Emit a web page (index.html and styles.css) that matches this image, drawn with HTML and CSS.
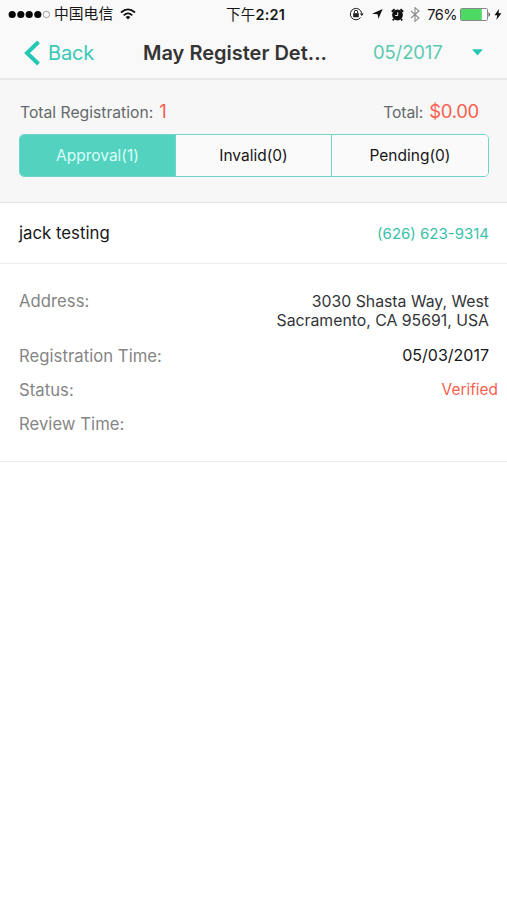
FILE: index.html
```html
<!DOCTYPE html>
<html lang="en">
<head>
<meta charset="utf-8">
<meta name="viewport" content="width=device-width, initial-scale=1">
<title>May Register Details</title>
<link rel="stylesheet" href="styles.css">
</head>
<body>
<header class="top">
  <div class="status">
    <div class="status-left">
      <svg class="signal" width="42" height="9" viewBox="0 0 42 9"><g fill="#050505"><circle cx="4.2" cy="4.5" r="3.6"/><circle cx="12.8" cy="4.5" r="3.6"/><circle cx="21.2" cy="4.5" r="3.6"/><circle cx="29.8" cy="4.5" r="3.6"/></g><circle cx="38.4" cy="4.5" r="3.2" fill="none" stroke="#888" stroke-width=".8"/></svg>
      <span class="carrier">中国电信</span>
      <svg class="wifi" width="16" height="12" viewBox="0 0 16 12" fill="none" stroke="#111" stroke-width="1.8"><path d="M1 4.5Q8-1.8 15 4.5M3.7 7.3Q8 3.5 12.3 7.3"/><path d="M5.6 9Q8 7 10.4 9L8 11.6Z" fill="#111" stroke="none"/></svg>
    </div>
    <span class="clock">下午<b>2:21</b></span>
    <div class="status-right">
      <svg width="15" height="14" viewBox="0 0 15 14" fill="none" stroke="#222"><path d="M11.6 10.5A5.7 5.7 0 1 1 12.7 6.5"/><path d="M10.8 6.5h4L12.8 9z" fill="#222" stroke="none"/><path d="M4.2 6.2h5.6v4H4.2z" fill="#222" stroke="none"/><path d="M5.3 6.4V5a1.7 1.7 0 0 1 3.4 0v1.4"/></svg>
      <svg class="location" width="11" height="10" viewBox="0 0 11 10"><path d="M10.7 0L6.4 9.8 5.6 5.3 0 4.7Z" fill="#111"/></svg>
      <svg class="alarm" width="13" height="13" viewBox="0 0 13 13"><circle cx="6.5" cy="7" r="5.4" fill="#111"/><path d="M.8 3.7L3.6 1.2M12.2 3.7L9.4 1.2M3 11l-1.2 1.4M10 11l1.2 1.4" stroke="#111" stroke-width="1.9"/><path d="M4.2 7.5h2.5V4.3" fill="none" stroke="#f8f8f8" stroke-width="1"/></svg>
      <svg class="bluetooth" width="10" height="15" viewBox="0 0 10 15"><path d="M1 4l8 7-4 3.3V.7L9 4l-8 7" fill="none" stroke="#8d8d8d" stroke-width="1.1"/></svg>
      <span class="percent">76%</span>
      <svg class="battery" width="31" height="13" viewBox="0 0 31 13"><rect x=".5" y=".5" width="27" height="12" rx="1.2" fill="#fff" stroke="#888"/><path d="M1 1h20.8v11H1z" fill="#4cd964"/><path d="M28.6 4q2.4 2.5 0 5z" fill="#222"/></svg>
      <svg class="bolt" width="8" height="11" viewBox="0 0 8 11"><path d="M5 0L.5 6.2h2.8L2.3 11 7.5 4.3H4.6Z" fill="#111"/></svg>
    </div>
  </div>
  <nav class="nav">
    <a class="back"><svg width="17" height="26" viewBox="0 0 17 26"><path d="M14.5 2L3 13l11.5 11" fill="none" stroke="#25c8b5" stroke-width="4"/></svg><span>Back</span></a>
    <h1>May Register Det...</h1>
    <div class="month"><span>05/2017</span><svg width="11" height="7" viewBox="0 0 11 7"><path d="M0 .3h11L5.5 6.5Z" fill="#25c8b5"/></svg></div>
  </nav>
</header>
<section class="summary">
  <div class="totals">
    <p><span class="reg-label">Total Registration:</span><strong class="count">1</strong></p>
    <p><span class="total-label">Total:</span><strong class="money">$0.00</strong></p>
  </div>
  <div class="tabs">
    <button class="tab active"><span>Approval(1)</span></button>
    <button class="tab"><span>Invalid(0)</span></button>
    <button class="tab"><span>Pending(0)</span></button>
  </div>
</section>
<main>
  <div class="person"><span class="name">jack testing</span><a class="phone">(626) 623-9314</a></div>
  <dl class="details">
    <div class="row address"><dt>Address:</dt><dd>3030 Shasta Way, West<br>Sacramento, CA 95691, USA</dd></div>
    <div class="row"><dt>Registration Time:</dt><dd class="date">05/03/2017</dd></div>
    <div class="row"><dt>Status:</dt><dd class="verified">Verified</dd></div>
    <div class="row"><dt>Review Time:</dt><dd></dd></div>
  </dl>
</main>
</body>
</html>
```
FILE: styles.css
```css
* { box-sizing: border-box; margin: 0; padding: 0; }
body { font-family: Inter, "Noto Sans CJK SC", sans-serif; background: #fff; color: #171717; font-size: 16px; }
svg { display: block; flex: none; }
span, a, dt, dd, h1 { white-space: nowrap; }
.top { height: 80px; background: #f9f9f9; border-bottom: 2px solid #e9e9e9; }
.status { height: 27px; display: grid; grid-template-columns: 226px 1fr auto; align-items: center; padding-right: 5px; }
.status-left, .status-right { display: flex; align-items: center; }
.status-left { padding-left: 8px; }
.carrier { font-size: 14.8px; line-height: 28px; margin-left: 4px; }
.wifi { margin-left: 7px; }
.clock { font-size: 14.5px; line-height: 27px; letter-spacing: .2px; }
.clock b { font-weight: 600; }
.location { margin-left: 8px; }
.alarm { margin-left: 8px; }
.bluetooth { margin-left: 6px; }
.percent { font-size: 14.5px; letter-spacing: -.5px; margin-left: 7px; }
.battery { margin-left: 3px; }
.bolt { margin-left: 3px; }
.nav { height: 51px; display: grid; grid-template-columns: 143px 230px 1fr; align-items: center; }
.back { display: flex; align-items: center; gap: 7px; padding-left: 24px; color: #38c9b8; font-size: 20px; letter-spacing: -.2px; }
h1 { font-size: 20px; font-weight: 600; color: #343434; letter-spacing: 0; }
.month { display: flex; align-items: center; justify-content: space-between; padding: 0 24px 1px 0; color: #5bc9b0; font-size: 18.5px; letter-spacing: -.15px; }
.summary { height: 123px; background: #f7f7f7; border-bottom: 1px solid #e5e5e5; padding: 19px 18px 0 19px; }
.totals { display: flex; justify-content: space-between; height: 35px; color: #64696b; padding: 0 10px 0 1px; }
.totals p { display: flex; align-items: baseline; line-height: 24px; font-size: 15.7px; }
.totals strong { color: #f9604f; font-weight: 400; font-size: 18.5px; margin-left: 6px; }
.totals .money { letter-spacing: -.3px; }
.total-label { letter-spacing: -.1px; }
.tabs { height: 43px; display: grid; grid-template-columns: 155px 156px 1fr; border: 1px solid #70d4c8; border-radius: 5px; overflow: hidden; }
.tab { border: 0; border-left: 1px solid #70d4c8; background: #fafafa; color: #171717; font: 400 15.5px Inter, sans-serif; font-feature-settings: "calt" 0; }
.tab.active { border-left: 0; background: #53d2c0; color: #d9fff8; }
.person { height: 61px; border-bottom: 1px solid #ededed; display: flex; justify-content: space-between; align-items: center; padding: 0 18px 0 19px; }
.name { font-size: 16.8px; }
.phone { color: #3bc1aa; font-size: 15px; }
.details { height: 198px; border-bottom: 1px solid #ededed; padding: 19px 18px 0 19px; }
.row { display: flex; justify-content: space-between; height: 34px; line-height: 35px; }
.row dt { color: #858585; font-size: 16.65px; line-height: 37px; letter-spacing: .05px; }
.row dd { font-size: 16px; text-align: right; }
.row.address { height: 55px; }
.address dd { color: #333539; font-size: 15.8px; line-height: 19px; padding-top: 9px; }
.row .verified { color: #f9604f; font-size: 15.4px; margin-right: -9px; }
```
